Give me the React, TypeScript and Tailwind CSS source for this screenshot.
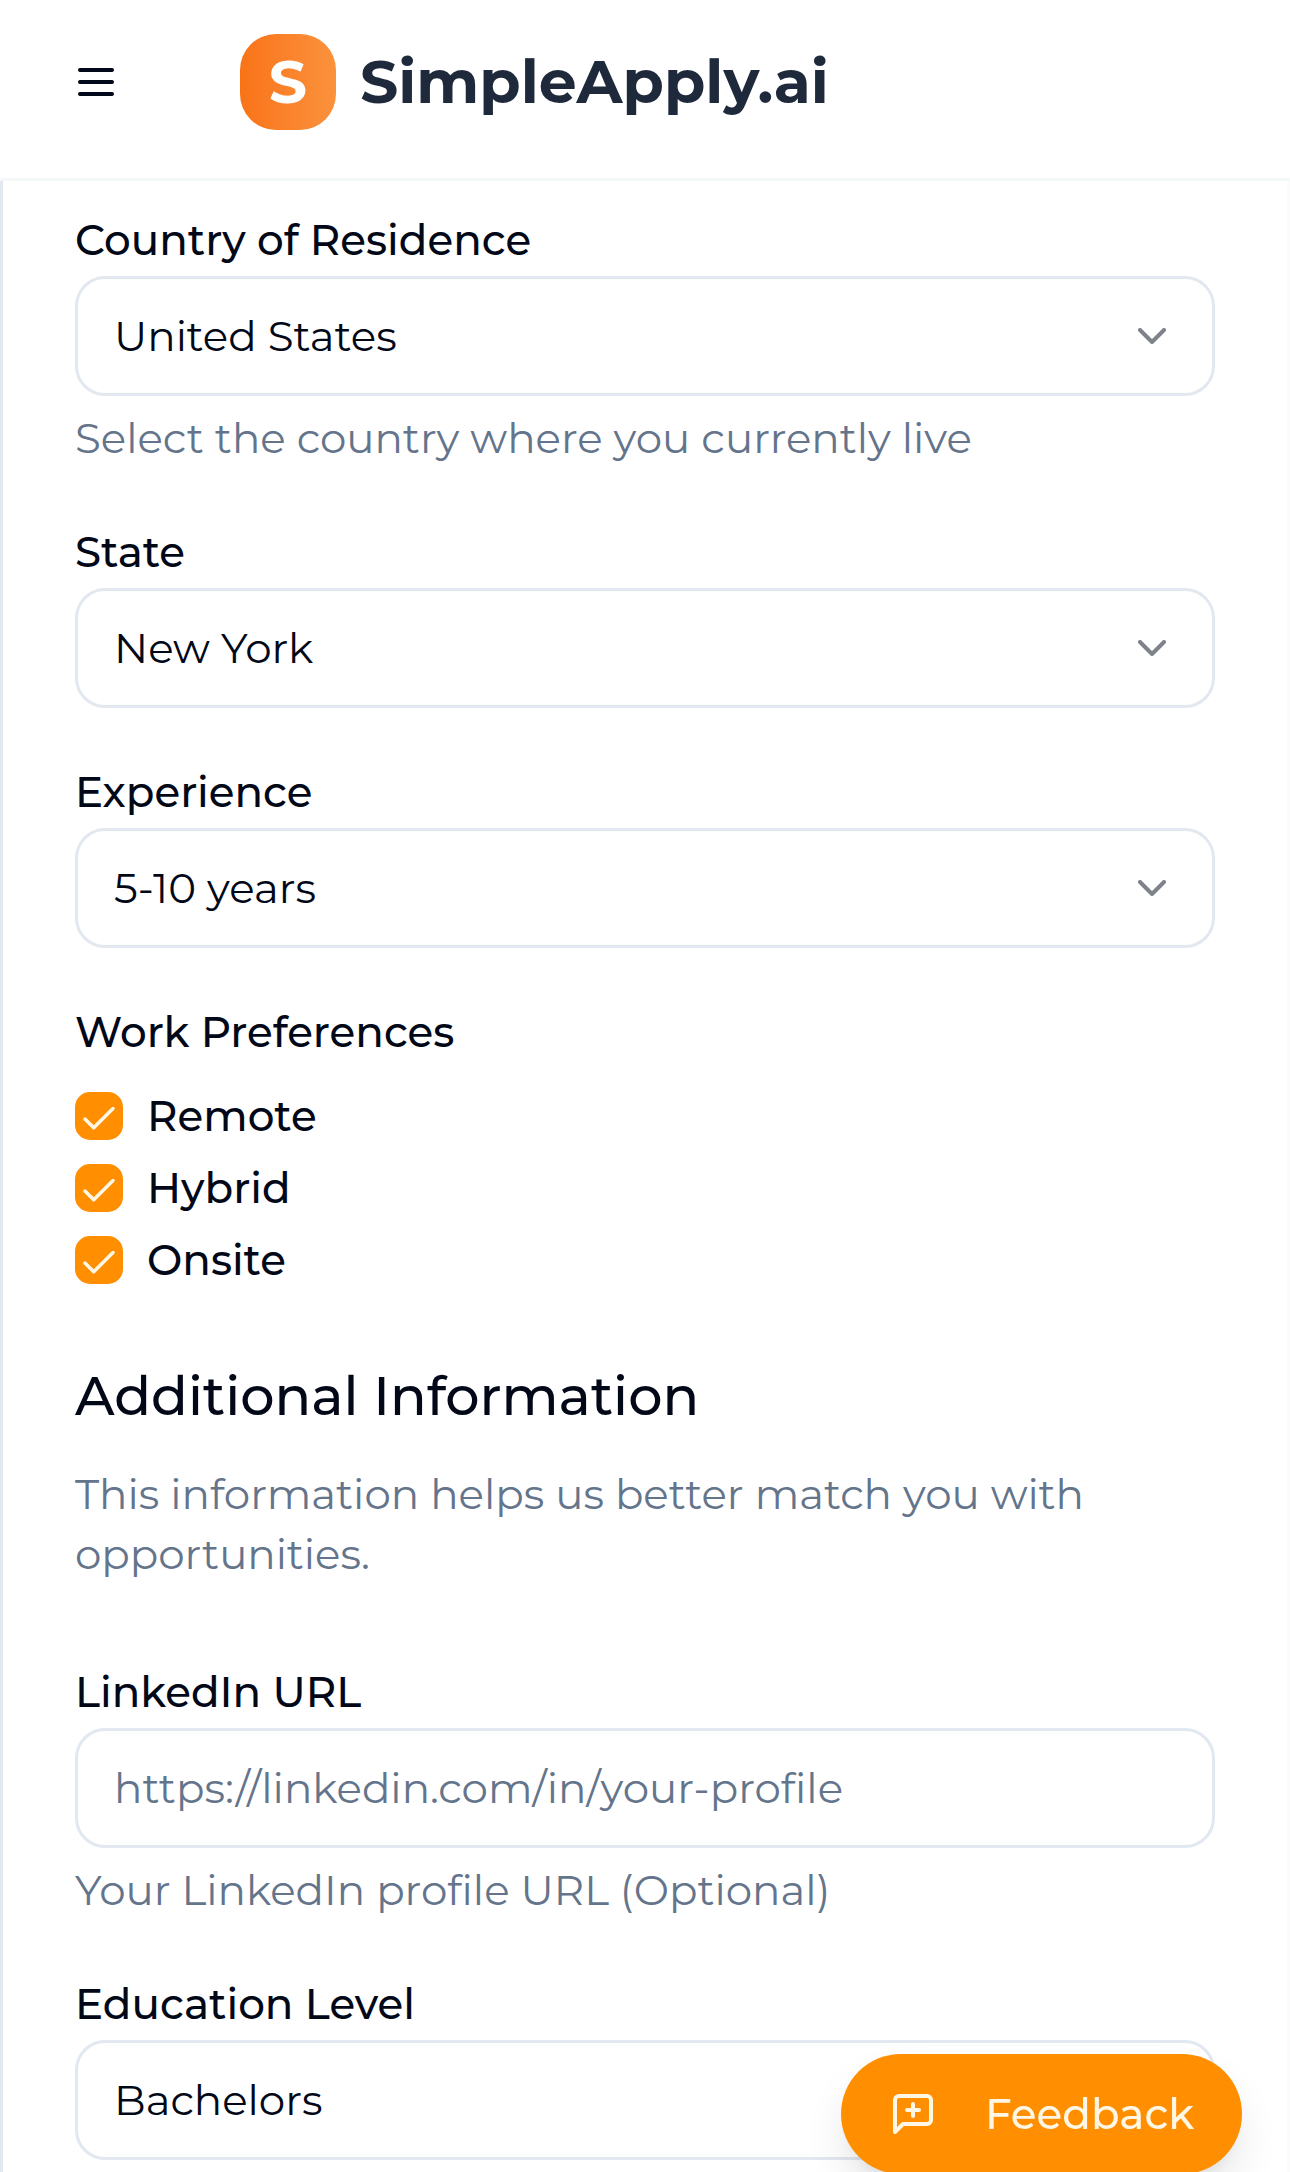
import React, { useState } from 'react';
import { ChevronDown } from 'lucide-react';

interface SelectFieldProps {
  id: string;
  label: string;
  options: string[];
  hint?: string;
}

const labelClass = 'block text-[42px] leading-12 font-medium text-[#020817]';
const controlClass =
  'block h-30 w-full rounded-[30px] border-3 border-[#e2e8f0] bg-white px-9 text-[42px] text-[#020817] placeholder:text-[#64748b] placeholder:opacity-100 outline-none focus:border-[#ff8f00]';
const hintClass = 'mt-3 text-[42px] leading-15 text-[#64748b]';

const SelectField: React.FC<SelectFieldProps> = ({ id, label, options, hint }) => {
  const [value, setValue] = useState(options[0]);

  return (
    <div>
      <label htmlFor={id} className={labelClass}>
        {label}
      </label>
      <div className="relative mt-3">
        <select
          id={id}
          value={value}
          onChange={(e) => setValue(e.target.value)}
          className={`${controlClass} appearance-none`}
        >
          {options.map((option) => (
            <option key={option} value={option}>
              {option}
            </option>
          ))}
        </select>
        <ChevronDown className="pointer-events-none absolute top-9 right-[39px] size-12 text-[#020817] opacity-50" />
      </div>
      {hint && <p className={hintClass}>{hint}</p>}
    </div>
  );
};

const CheckboxRow: React.FC<{ id: string; label: string }> = ({ id, label }) => {
  const [checked, setChecked] = useState(true);

  return (
    <div className="flex items-center gap-6">
      <div className="relative size-12">
        <input
          id={id}
          type="checkbox"
          checked={checked}
          onChange={(e) => setChecked(e.target.checked)}
          className="block size-12 appearance-none rounded-[15px] border-3 border-[#ff8f00] checked:bg-[#ff8f00]"
        />
        {checked && (
          <svg
            className="pointer-events-none absolute inset-x-0 bottom-0 mx-auto size-[42px]"
            viewBox="0 0 24 24"
            fill="none"
            stroke="#fff7e6"
            strokeWidth={2}
            strokeLinecap="round"
            strokeLinejoin="round"
          >
            <path d="M20 6 9 17l-5-5" />
          </svg>
        )}
      </div>
      <label htmlFor={id} className={labelClass}>
        {label}
      </label>
    </div>
  );
};

const Header: React.FC = () => (
  <header className="flex h-[181px] items-center border-b-3 border-[#f5f8f9] bg-white px-[72px] pb-[14px]">
    <button type="button" aria-label="Open menu" className="text-[#020817]">
      <svg
        className="size-12"
        viewBox="0 0 24 24"
        fill="none"
        stroke="currentColor"
        strokeWidth={2}
        strokeLinecap="round"
      >
        <path d="M4 6h16M4 12h16M4 18h16" />
      </svg>
    </button>
    <a href="#" className="ml-30 flex items-center gap-6">
      <span className="flex size-24 items-center justify-center rounded-[36px] bg-linear-to-r from-[#f97316] to-[#fb923c] text-[60px] leading-none font-bold text-white">
        S
      </span>
      <span className="text-[60px] leading-none font-bold text-[#1e293b]">SimpleApply.ai</span>
    </a>
  </header>
);

const App: React.FC = () => {
  const [linkedIn, setLinkedIn] = useState('');

  return (
    <div className="bg-white font-['Montserrat','Inter',sans-serif]">
      <Header />

      <main className="border-r-3 border-l-3 border-r-[#fbfbfc] border-l-[#e2e8f0] pt-[35px] pr-[72px] pb-3 pl-[72px]">
        <form className="flex flex-col gap-15">
          <SelectField
            id="country"
            label="Country of Residence"
            options={['United States', 'Canada', 'United Kingdom']}
            hint="Select the country where you currently live"
          />
          <SelectField id="state" label="State" options={['New York', 'California', 'Texas']} />
          <SelectField
            id="experience"
            label="Experience"
            options={['5-10 years', '0-2 years', '2-5 years', '10+ years']}
          />

          <fieldset>
            <legend className={labelClass}>Work Preferences</legend>
            <div className="mt-9 flex flex-col gap-6">
              <CheckboxRow id="remote" label="Remote" />
              <CheckboxRow id="hybrid" label="Hybrid" />
              <CheckboxRow id="onsite" label="Onsite" />
            </div>
          </fieldset>

          <section className="mt-3 mb-6">
            <h2 className="text-[54px] leading-20 font-medium text-[#020817]">Additional Information</h2>
            <p className="mt-7 text-[42px] leading-15 text-[#64748b]">
              This information helps us better match you with opportunities.
            </p>
          </section>

          <div>
            <label htmlFor="linkedin" className={labelClass}>
              LinkedIn URL
            </label>
            <input
              id="linkedin"
              type="url"
              value={linkedIn}
              onChange={(e) => setLinkedIn(e.target.value)}
              placeholder="https://linkedin.com/in/your-profile"
              className={`${controlClass} mt-3`}
            />
            <p className={hintClass}>Your LinkedIn profile URL (Optional)</p>
          </div>

          <SelectField
            id="education"
            label="Education Level"
            options={['Bachelors', 'Masters', 'Doctorate', 'High School']}
          />
        </form>
      </main>

      {/* Floating feedback button */}
      <button
        type="button"
        className="fixed right-12 -bottom-0.5 flex h-30 items-center gap-12 rounded-full bg-[#ff8f00] px-12 text-[42px] font-medium text-[#fff7e6] shadow-[0_24px_45px_-6px_rgba(0,0,0,0.12),0_12px_18px_-12px_rgba(0,0,0,0.1)]"
      >
        <svg
          className="size-12"
          viewBox="0 0 24 24"
          fill="none"
          stroke="currentColor"
          strokeWidth={2}
          strokeLinecap="round"
          strokeLinejoin="round"
        >
          <path d="M21 15a2 2 0 0 1-2 2H7l-4 4V5a2 2 0 0 1 2-2h14a2 2 0 0 1 2 2z" />
          <path d="M12 7v6M9 10h6" />
        </svg>
        Feedback
      </button>
    </div>
  );
};

export default App;
